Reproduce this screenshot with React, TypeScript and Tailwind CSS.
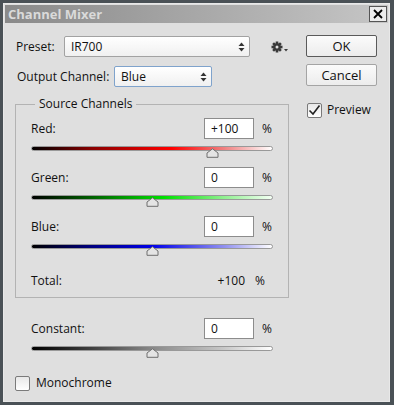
import React from 'react';

const font = "font-['Open_Sans','Noto_Sans',sans-serif]";

const UpDown = () => (
  <svg width="7" height="10" viewBox="0 0 7 10" className="shrink-0">
    <path d="M3.5 0.5 L6.5 4 H0.5 Z" fill="#333" />
    <path d="M3.5 9.5 L6.5 6 H0.5 Z" fill="#333" />
  </svg>
);

const Gear = () => (
  <svg width="18" height="12" viewBox="0 0 18 12">
    <g transform="translate(6 6)" fill="#3a3a3a">
      {[0, 45, 90, 135].map((a) => (
        <rect key={a} x="-1.3" y="-5.5" width="2.6" height="11" transform={`rotate(${a})`} />
      ))}
      <circle r="3.8" />
      <circle r="1.5" fill="#e0e0e0" />
    </g>
    <path d="M13 8 H17 L15 10.5 Z" fill="#3a3a3a" />
  </svg>
);

const Thumb = ({ pos }: { pos: number }) => (
  <svg
    width="13"
    height="10"
    viewBox="0 0 13 10"
    className="absolute top-[2px]"
    style={{ left: `calc(${pos}% - 6.5px)` }}
  >
    <path d="M6.5 0.8 L12 5 V9.3 H1 V5 Z" fill="#e4e4e4" stroke="#6e6e6e" strokeWidth="1" strokeLinejoin="round" />
  </svg>
);

const Slider = ({ gradient, pos }: { gradient: string; pos: number }) => (
  <div className="relative h-[5px] mt-[7px]">
    <div
      className="h-[5px] rounded-full border border-[#999]"
      style={{ background: gradient }}
    />
    <Thumb pos={pos} />
  </div>
);

const NumberRow = ({ label, value }: { label: string; value: string }) => (
  <div className="flex items-center h-[21px]">
    <span className="flex-1">{label}</span>
    <div className="w-[50px] h-[21px] bg-white border border-[#8c8c8c] pl-[6px] leading-[19px]">{value}</div>
    <span className="w-[19px] pl-[8px]">%</span>
  </div>
);

const Channel = ({ label, value, gradient, pos, first }: { label: string; value: string; gradient: string; pos: number; first?: boolean }) => (
  <div className={first ? '' : 'mt-[16px]'}>
    <NumberRow label={label} value={value} />
    <Slider gradient={gradient} pos={pos} />
  </div>
);

const Button = ({ children, primary }: { children: React.ReactNode; primary?: boolean }) => (
  <button
    className={`w-[71px] h-[22px] rounded-[2px] border bg-gradient-to-b from-[#fbfbfb] to-[#ececec] text-[13px] leading-[20px] ${
      primary ? 'border-[#5a5a5a]' : 'border-[#a4a4a4]'
    }`}
  >
    {children}
  </button>
);

const Checkbox = ({ checked }: { checked?: boolean }) => (
  <div className="w-[15px] h-[15px] border border-[#7a7a7a] bg-gradient-to-b from-[#e8e8e8] to-[#ffffff] rounded-[2px] flex items-center justify-center">
    {checked && (
      <svg width="13" height="12" viewBox="0 0 13 12">
        <path d="M1.5 6.5 L5 10 L11.5 1.5" fill="none" stroke="#222" strokeWidth="1.6" />
      </svg>
    )}
  </div>
);

export default function App() {
  return (
    <div className={`w-[394px] h-[405px] bg-[#4a5156] pt-[3px] pl-[3px] pr-[4px] pb-[3px] ${font} text-[12px] text-[#111]`}>
      <div className="h-full border border-[#e8e8e8] flex flex-col bg-[#dfdfdf]">
        {/* title bar */}
        <div className="h-[18px] mx-[1px] mt-[1px] flex items-center justify-between bg-gradient-to-r from-[#8a8a8a] to-[#c6c6c6] pl-[3px] pr-[1px]">
          <span className="font-bold text-[13px] text-[#dadada] leading-none">Channel Mixer</span>
          <div className="w-[18px] h-[16px] border border-[#555] bg-[#ececec] flex items-center justify-center">
            <svg width="10" height="10" viewBox="0 0 10 10">
              <path d="M1 1 L9 9 M9 1 L1 9" stroke="#000" strokeWidth="1.8" />
            </svg>
          </div>
        </div>

        {/* body */}
        <div className="flex-1 flex pl-[11px]">
          {/* left column */}
          <div className="w-[274px] pt-[13px] flex flex-col">
            <div className="flex items-center h-[21px]">
              <span className="w-[49px] pl-[1px]">Preset:</span>
              <div className="w-[186px] h-[21px] rounded-[2px] border border-[#a2a2a2] bg-gradient-to-b from-[#ffffff] to-[#f0f0f0] flex items-center justify-between pl-[6px] pr-[4px]">
                <span>IR700</span>
                <UpDown />
              </div>
              <div className="ml-[21px] flex items-center">
                <Gear />
              </div>
            </div>

            <div className="flex items-center h-[21px] mt-[9px]">
              <span className="w-[99px] pl-[2px]">Output Channel:</span>
              <div className="w-[98px] h-[21px] rounded-[2px] border border-[#7fa3cc] bg-gradient-to-b from-[#ffffff] to-[#f0f0f0] flex items-center justify-between pl-[6px] pr-[4px]">
                <span>Blue</span>
                <UpDown />
              </div>
            </div>

            <div className="mt-[17px] h-[194px] border border-[#b3b3b3] px-[15px] flex flex-col">
              <span className="-mt-[9px] ml-[4px] self-start px-[4px] bg-[#dfdfdf] leading-[16px]">Source Channels</span>
              <div className="mt-[6px]">
                <Channel first label="Red:" value="+100" pos={75} gradient="linear-gradient(to right,#000 0%,#8a0000 25%,#ff0000 58%,#f08080 80%,#fff 100%)" />
                <Channel label="Green:" value="0" pos={50} gradient="linear-gradient(to right,#000 0%,#006000 25%,#00e000 55%,#90f090 80%,#f4fff4 100%)" />
                <Channel label="Blue:" value="0" pos={50} gradient="linear-gradient(to right,#000 0%,#000080 25%,#0000e8 50%,#9090f0 80%,#fff 100%)" />
              </div>
              <div className="flex items-center h-[16px] mt-[24px]">
                <span className="flex-1">Total:</span>
                <span className="w-[50px] text-right pr-[9px]">+100</span>
                <span className="w-[19px] pl-[1px]">%</span>
              </div>
            </div>

            <div className="mt-[20px] px-[16px]">
              <NumberRow label="Constant:" value="0" />
              <Slider pos={50} gradient="linear-gradient(to right,#000 0%,#404040 25%,#888 50%,#c8c8c8 80%,#fff 100%)" />
            </div>

            <div className="mt-[23px] flex items-center">
              <Checkbox />
              <span className="ml-[6px]">Monochrome</span>
            </div>
          </div>

          {/* right column */}
          <div className="ml-[17px] pt-[12px] flex flex-col">
            <Button primary>OK</Button>
            <div className="mt-[7px]">
              <Button>Cancel</Button>
            </div>
            <div className="mt-[15px] flex items-center pl-[1px]">
              <Checkbox checked />
              <span className="ml-[5px]">Preview</span>
            </div>
          </div>
        </div>
      </div>
    </div>
  );
}
